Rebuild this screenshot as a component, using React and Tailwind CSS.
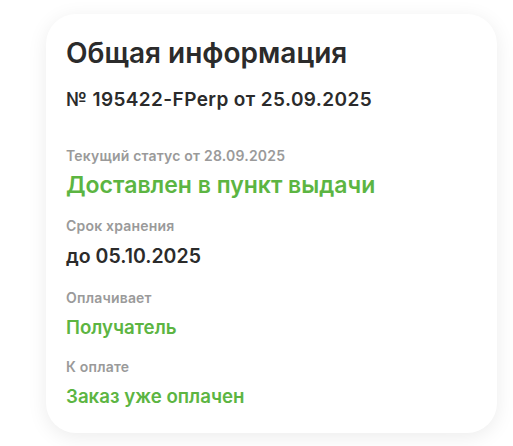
export default function App() {
  return (
    <div className="min-h-screen bg-white pt-[14px] pl-[46px]" style={{ fontFamily: 'Inter, "Noto Sans", sans-serif' }}>
      <div className="w-[451px] h-[419px] rounded-[30px] bg-white shadow-[0_4px_20px_rgba(0,0,0,0.08)] px-5 pt-[22px]">
        <h1 className="text-[28px] leading-[34px] font-semibold text-[#2b2b2b]">Общая информация</h1>
        <p className="mt-[18px] text-[19px] leading-[24px] font-semibold tracking-[0.4px] text-[#2b2b2b]">№ 195422-FPerp от 25.09.2025</p>

        <div className="mt-[35px]">
          <p className="text-[14px] leading-[18px] font-semibold tracking-[0.2px] text-[#9a9a9a]">Текущий статус от 28.09.2025</p>
          <p className="mt-[6px] text-[23px] leading-[28px] font-semibold text-[#5cb542]">Доставлен в пункт выдачи</p>
        </div>

        <div className="mt-[18px]">
          <p className="text-[14px] leading-[18px] font-semibold tracking-[0.2px] text-[#9a9a9a]">Срок хранения</p>
          <p className="mt-[9px] text-[19.5px] leading-[24px] font-semibold text-[#2b2b2b]">до 05.10.2025</p>
        </div>

        <div className="mt-[21px]">
          <p className="text-[14px] leading-[18px] font-semibold tracking-[0.2px] text-[#9a9a9a]">Оплачивает</p>
          <p className="mt-[9px] text-[18.7px] leading-[24px] font-semibold text-[#5cb542]">Получатель</p>
        </div>

        <div className="mt-[18px]">
          <p className="text-[14px] leading-[18px] font-semibold tracking-[0.2px] text-[#9a9a9a]">К оплате</p>
          <p className="mt-[9px] text-[18.7px] leading-[24px] font-semibold text-[#5cb542]">Заказ уже оплачен</p>
        </div>
      </div>
    </div>
  );
}
